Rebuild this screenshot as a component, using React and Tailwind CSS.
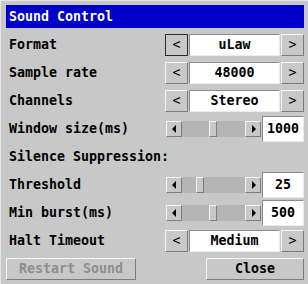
import React from "react";

const raised =
  "border border-t-[#f4f4f4] border-l-[#f4f4f4] border-b-[#7c7c7c] border-r-[#7c7c7c] bg-[#c8c8c8]";
const sunken =
  "border border-t-[#8c8c8c] border-l-[#8c8c8c] border-b-[#ececec] border-r-[#ececec] bg-white";

function Spin({ value, focused }) {
  return (
    <div className="flex items-center gap-[1px]">
      <div
        className={`w-[23px] h-[22px] flex items-center justify-center font-normal ${
          focused ? "border border-[#2a2a2a] bg-[#c8c8c8]" : raised
        }`}
      >
        &lt;
      </div>
      <div className={`w-[91px] h-[22px] flex items-center justify-center ${sunken}`}>{value}</div>
      <div className={`w-[23px] h-[22px] flex items-center justify-center font-normal ${raised}`}>&gt;</div>
    </div>
  );
}

function Arrow({ dir }) {
  return (
    <div className={`w-[16px] h-[16px] flex items-center justify-center ${raised}`}>
      <svg width="5" height="8" viewBox="0 0 5 8">
        {dir === "left" ? (
          <polygon points="4,0 0,4 4,8" fill="#000" />
        ) : (
          <polygon points="1,0 5,4 1,8" fill="#000" />
        )}
      </svg>
    </div>
  );
}

function Slider({ value, pos }) {
  return (
    <div className="flex items-center gap-[1px]">
      <div className="flex items-center">
        <Arrow dir="left" />
        <div className="w-[63px] h-[16px] bg-[#b4b4b4] relative">
          <div className={`absolute top-0 w-[8px] h-[16px] ${raised}`} style={{ left: pos }} />
        </div>
        <Arrow dir="right" />
      </div>
      <div className={`w-[42px] h-[26px] flex items-center justify-center ${sunken}`}>{value}</div>
    </div>
  );
}

function Row({ label, children }) {
  return (
    <div className="h-[28px] flex items-center justify-between pl-[3px]">
      <span>{label}</span>
      {children}
    </div>
  );
}

export default function App() {
  return (
    <div
      className="w-[308px] h-[284px] bg-[#c8c8c8] pt-[4px] pl-[5px] pr-[4px] text-black font-bold text-[13.3px] leading-none border-l border-t border-[#e6e6e6]"
      style={{ fontFamily: '"DejaVu Sans Mono", "Liberation Mono", monospace' }}
    >
      <div className="h-[23px] bg-[#0000c8] text-white flex items-center pl-[3px]">Sound Control</div>
      <div className="h-[3px]" />
      <Row label="Format">
        <Spin value="uLaw" focused />
      </Row>
      <Row label="Sample rate">
        <Spin value="48000" />
      </Row>
      <Row label="Channels">
        <Spin value="Stereo" />
      </Row>
      <Row label="Window size(ms)">
        <Slider value="1000" pos={27} />
      </Row>
      <Row label="Silence Suppression:" />
      <Row label="Threshold">
        <Slider value="25" pos={14} />
      </Row>
      <Row label="Min burst(ms)">
        <Slider value="500" pos={27} />
      </Row>
      <Row label="Halt Timeout">
        <Spin value="Medium" />
      </Row>
      <div className="h-[28px] flex items-center justify-between">
        <div className={`w-[130px] h-[22px] flex items-center justify-center text-[#8e8e8e] ${raised}`}>
          Restart Sound
        </div>
        <div className={`w-[98px] h-[22px] flex items-center justify-center ${raised}`}>Close</div>
      </div>
    </div>
  );
}
